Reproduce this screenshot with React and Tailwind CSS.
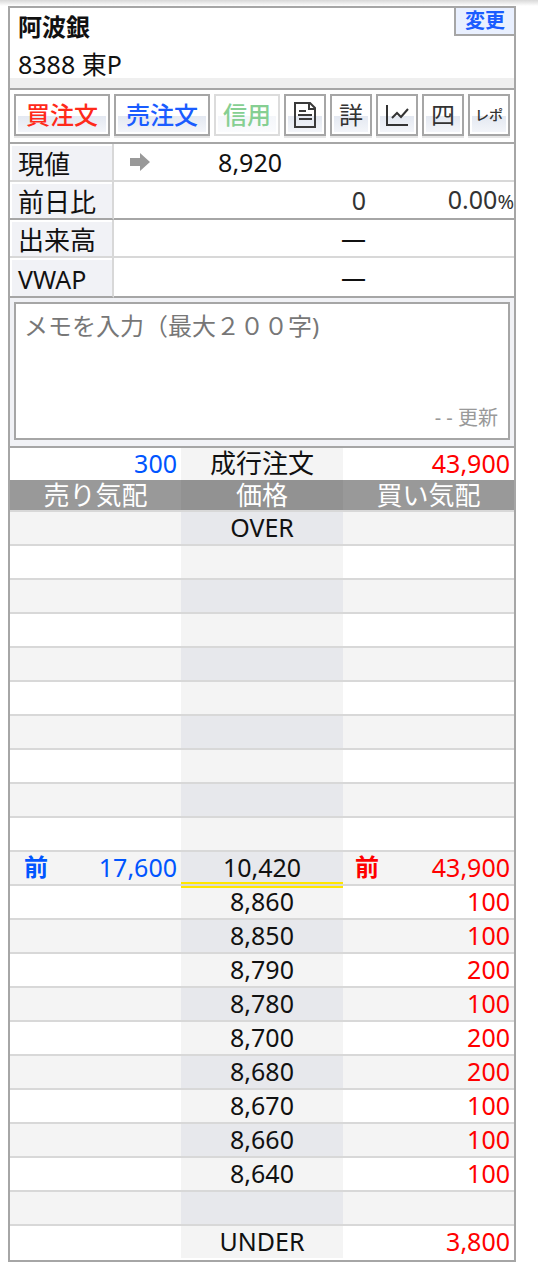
import React, { useState } from "react";

const font = "font-['Noto_Sans','Noto_Sans_CJK_JP',sans-serif]";

// Order book rows, from the highest price down
const board = [
  { price: "OVER" },
  {},
  {},
  {},
  {},
  {},
  {},
  {},
  {},
  {},
  { askMark: "前", ask: "17,600", price: "10,420", bidMark: "前", bid: "43,900", edge: "bottom" },
  { price: "8,860", bid: "100", edge: "top" },
  { price: "8,850", bid: "100" },
  { price: "8,790", bid: "200" },
  { price: "8,780", bid: "100" },
  { price: "8,700", bid: "200" },
  { price: "8,680", bid: "200" },
  { price: "8,670", bid: "100" },
  { price: "8,660", bid: "100" },
  { price: "8,640", bid: "100" },
  {},
  { price: "UNDER", bid: "3,800" },
];

const edges = {
  top: "shadow-[inset_0_2px_0_#ffe600]",
  bottom: "shadow-[inset_0_-2px_0_#ffe600]",
};

const ToolButton = ({ children, label, className = "w-[42px]", disabled }) => (
  <button
    type="button"
    aria-label={label}
    disabled={disabled}
    className={`h-[42px] shrink-0 border-2 bg-white p-0.5 ${
      disabled ? "border-[#dcdcdc]" : "border-[#a6a6a6] shadow-[0_2px_0_#e6e6e6]"
    } ${className}`}
  >
    <span
      className={`flex h-full items-center justify-center ${
        disabled
          ? "bg-[linear-gradient(#fff_52%,#f4f6fa_52%,#fafbfd)]"
          : "bg-[linear-gradient(#fff_52%,#e3e8f1_52%,#f3f5f9)]"
      }`}
    >
      {children}
    </span>
  </button>
);

const DocIcon = () => (
  <svg viewBox="0 0 22 26" className="h-[26px] w-[22px]" fill="none" stroke="#3a3a3a" strokeWidth="2">
    <path d="M1 1h15l5 5v19H1z" />
    <path d="M15 1v6h6" />
    <path d="M5 9h7M4 13h14M5 17h13" />
  </svg>
);

const ChartIcon = () => (
  <svg viewBox="0 0 24 24" className="h-6 w-6" fill="none" stroke="#333" strokeWidth="2">
    <path d="M2 2v20h21" />
    <path d="M7 15l5-5 4 4 7-8" />
  </svg>
);

const ArrowIcon = () => (
  <svg viewBox="0 0 20 18" className="h-[18px] w-5" aria-hidden="true">
    <path d="M0 5h10V0l10 9-10 9v-5H0z" fill="#999" />
  </svg>
);

const InfoLabel = ({ children }) => (
  <th
    scope="row"
    className="border-r-2 border-[#d8d8d8] bg-[#f1f2f6] pt-1 pb-0 pl-2 text-left font-normal whitespace-nowrap shadow-[inset_2px_2px_0_#fff]"
  >
    {children}
  </th>
);

const App = () => {
  const [memo, setMemo] = useState("");

  return (
    <div className={`${font} bg-white pb-4 text-[25px] leading-[32px] text-[#111]`}>
      <div className="h-1.5 bg-linear-to-b from-[#d8d8d8] to-white" />

      <main className="mr-[22px] ml-2 border-2 border-[#a6a6a6]">
        {/* Stock name */}
        <header className="relative border-b-2 border-[#a6a6a6]">
          <div className="px-2 pt-0.5">
            <h1 className="text-[24px] leading-[34px] font-bold">阿波銀</h1>
            <p className="pt-1.5 text-[25px] leading-[28px]">8388 東P</p>
          </div>
          <div className="h-2.5 bg-[#efefef]" />
          <button
            type="button"
            className="absolute top-0 right-0 h-7 w-[60px] border-b-2 border-l-2 border-[#a6a6a6] bg-[#e9f0ff] text-[20px] leading-[24px] font-bold text-[#1a5cff]"
          >
            変更
          </button>
        </header>

        {/* Order buttons */}
        <div className="flex gap-1 border-b-2 border-[#a6a6a6] px-1 pt-1 pb-1.5 text-[24px]">
          <ToolButton className="w-24 font-medium text-[#ff2a1a]">買注文</ToolButton>
          <ToolButton className="w-24 font-medium text-[#1a5cff]">売注文</ToolButton>
          <ToolButton className="w-[66px] font-medium text-[#86cf92]" disabled>信用</ToolButton>
          <ToolButton label="ニュース"><DocIcon /></ToolButton>
          <ToolButton className="w-[42px] text-[#333]">詳</ToolButton>
          <ToolButton label="チャート"><ChartIcon /></ToolButton>
          <ToolButton className="w-[42px] text-[#333]">四</ToolButton>
          <ToolButton className="w-[42px] text-[14px] font-medium text-[#333]">レポ</ToolButton>
        </div>

        {/* Current price */}
        <table className="w-full table-fixed border-separate border-spacing-0">
          <colgroup>
            <col className="w-[104px]" />
            <col className="w-[168px]" />
            <col className="w-[84px]" />
            <col />
          </colgroup>
          <tbody>
            <tr className="h-[38px] *:border-b-2 *:border-b-[#d8d8d8]">
              <InfoLabel><span className="text-[26px]">現値</span></InfoLabel>
              <td className="p-0">
                <div className="flex items-center justify-between pl-4">
                  <ArrowIcon />
                  <span>8,920</span>
                </div>
              </td>
              <td colSpan={2} />
            </tr>
            <tr className="h-[38px] text-[#333] *:border-b-2 *:border-b-[#a6a6a6]">
              <InfoLabel><span className="text-[26px] text-[#111]">前日比</span></InfoLabel>
              <td colSpan={2} className="p-0 text-right">0</td>
              <td className="p-0 text-right">0.00<span className="text-[20px]">%</span></td>
            </tr>
            <tr className="h-[38px] *:border-b-2 *:border-b-[#d8d8d8]">
              <InfoLabel><span className="text-[26px]">出来高</span></InfoLabel>
              <td colSpan={2} className="p-0 text-right">—</td>
              <td />
            </tr>
            <tr className="h-10 *:border-b-2 *:border-b-[#a6a6a6]">
              <InfoLabel>VWAP</InfoLabel>
              <td colSpan={2} className="p-0 text-right">—</td>
              <td />
            </tr>
          </tbody>
        </table>

        {/* Memo */}
        <div className="border-b-2 border-[#a6a6a6] bg-[#f1f2f6] px-1 pt-1 pb-1.5">
          <div className="border-2 border-[#a6a6a6] bg-white">
            <textarea
              aria-label="メモ"
              value={memo}
              maxLength={200}
              onChange={(e) => setMemo(e.target.value)}
              placeholder="メモを入力（最大２００字)"
              className="block h-[98px] w-full resize-none px-2 pt-1.5 text-[24px] leading-[32px] outline-none placeholder:text-[#777]"
            />
            <p className="pr-2.5 pb-1 text-right text-[20px] leading-[32px] text-[#999]">- - 更新</p>
          </div>
        </div>

        {/* Order book */}
        <table className="w-full table-fixed border-separate border-spacing-0 text-center">
          <colgroup>
            <col />
            <col className="w-[162px]" />
            <col />
          </colgroup>
          <thead>
            <tr className="h-8 *:p-0 *:align-top *:leading-[30px]">
              <td className="text-right text-[#0055ff]"><div className="pr-1">300</div></td>
              <th scope="col" className="bg-[#f4f4f4] text-[26px] font-normal">成行注文</th>
              <td className="text-right text-[#ff0000]"><div className="pr-1">43,900</div></td>
            </tr>
            <tr className="h-8 bg-[#999] text-[26px] text-white *:border-b-2 *:border-[#d8d8d8] *:p-0 *:leading-[30px] *:font-normal">
              <th scope="col">売り気配</th>
              <th scope="col" className="bg-[#929292]">価格</th>
              <th scope="col">買い気配</th>
            </tr>
          </thead>
          <tbody>
            {board.map((row, i) => (
              <tr
                key={i}
                className="h-[34px] odd:bg-[#f4f4f4] *:border-b-2 *:border-b-[#d8d8d8] *:p-0 *:align-top *:leading-[30px] last:*:border-b-white"
              >
                <td className="text-[#0055ff]">
                  <div className="flex justify-between pr-1 pl-3.5">
                    <span className="text-[24px] font-bold">{row.askMark}</span>
                    <span>{row.ask}</span>
                  </div>
                </td>
                <td className={`${i % 2 ? "bg-[#f4f4f4]" : "bg-[#e7e8ec]"} ${edges[row.edge] || ""}`}>
                  {row.price}
                </td>
                <td className="text-[#ff0000]">
                  <div className="flex justify-between pr-1 pl-3">
                    <span className="text-[24px] font-bold">{row.bidMark}</span>
                    <span>{row.bid}</span>
                  </div>
                </td>
              </tr>
            ))}
          </tbody>
        </table>
      </main>
    </div>
  );
};

export default App;
